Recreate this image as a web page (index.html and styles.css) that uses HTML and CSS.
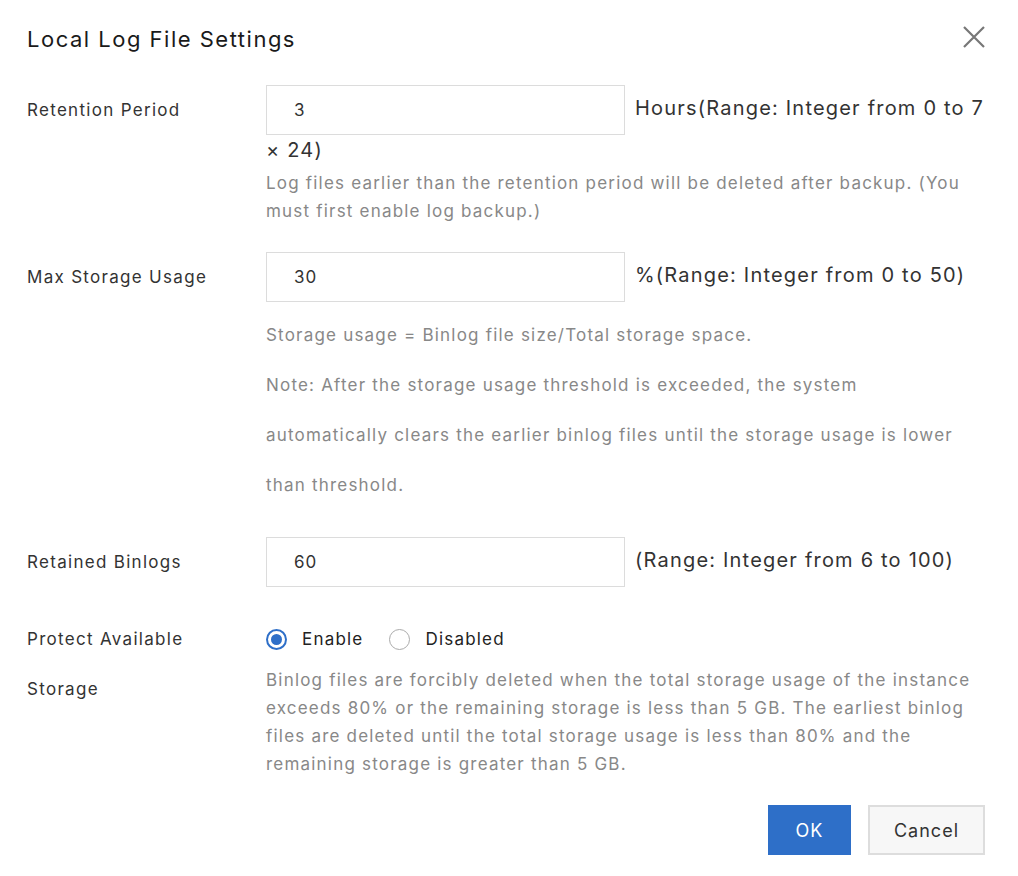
FILE: index.html
```html
<!DOCTYPE html>
<html>
<head>
<meta charset="utf-8">
<link rel="stylesheet" href="styles.css">
</head>
<body>
<div class="dialog">
  <div class="header">
    <h1 class="title">Local Log File Settings</h1>
    <span class="close" aria-label="close">
      <svg width="24" height="24" viewBox="0 0 24 24"><path d="M2 2 L22 22 M22 2 L2 22" stroke="#777" stroke-width="2.2" fill="none"/></svg>
    </span>
  </div>
  <div class="form">
    <div class="row">
      <div class="label">Retention Period</div>
      <div class="control">
        <div class="line"><span class="input">3</span><span class="unit">Hours(Range: Integer from 0 to 7 × 24)</span></div>
        <div class="help">Log files earlier than the retention period will be deleted after backup. (You must first enable log backup.)</div>
      </div>
    </div>
    <div class="row">
      <div class="label">Max Storage Usage</div>
      <div class="control">
        <div class="line"><span class="input">30</span><span class="unit">%(Range: Integer from 0 to 50)</span></div>
        <div class="help tall">
          <div>Storage usage = Binlog file size/Total storage space.</div>
          <div>Note: After the storage usage threshold is exceeded, the system automatically clears the earlier binlog files until the storage usage is lower than threshold.</div>
        </div>
      </div>
    </div>
    <div class="row">
      <div class="label">Retained Binlogs</div>
      <div class="control">
        <div class="line"><span class="input">60</span><span class="unit">(Range: Integer from 6 to 100)</span></div>
      </div>
    </div>
    <div class="row">
      <div class="label">Protect Available Storage</div>
      <div class="control">
        <div class="radios">
          <label class="radio"><span class="dot checked"></span>Enable</label>
          <label class="radio"><span class="dot"></span>Disabled</label>
        </div>
        <div class="help">Binlog files are forcibly deleted when the total storage usage of the instance exceeds 80% or the remaining storage is less than 5 GB. The earliest binlog files are deleted until the total storage usage is less than 80% and the remaining storage is greater than 5 GB.</div>
      </div>
    </div>
  </div>
  <div class="footer">
    <button class="btn primary">OK</button>
    <button class="btn">Cancel</button>
  </div>
</div>
</body>
</html>
```
FILE: styles.css
```css
* { box-sizing: border-box; }
html, body { margin: 0; background: #fff; }
body {
  font-family: Inter, "Noto Sans", "Liberation Sans", sans-serif;
  color: #333;
}
.dialog {
  width: 1018px;
  height: 876px;
  padding: 0 28px 0 27px;
}
.header {
  height: 78px;
  display: flex;
  align-items: center;
  justify-content: space-between;
  padding-right: 4px;
}
.title {
  margin: 0;
  font-size: 22px;
  font-weight: 400;
  letter-spacing: 1.5px;
  color: #1a1a1a;
}
.close { display: flex; margin-top: -4px; }
.form {
  padding-top: 7px;
  display: flex;
  flex-direction: column;
  gap: 27px;
}
.row {
  display: grid;
  grid-template-columns: 239px 1fr;
}
.label {
  font-size: 17px;
  line-height: 50px;
  letter-spacing: 1.3px;
  color: #333;
  padding-right: 40px;
}
.line {
  font-size: 20px;
  line-height: 30px;
  letter-spacing: 1.2px;
  color: #333;
}
.input {
  display: inline-block;
  vertical-align: middle;
  width: 359px;
  height: 50px;
  border: 1px solid #dcdcdc;
  padding-left: 27px;
  font-size: 17px;
  line-height: 48px;
  color: #333;
  margin-right: 10px;
  letter-spacing: 1px;
}
.help {
  font-size: 17px;
  line-height: 28px;
  letter-spacing: 1.2px;
  color: #888;
  margin-top: 4px;
}
.help.tall { line-height: 50px; margin-top: 8px; max-width: 700px; }
.radios + .help { margin-top: 2px; }
.radios {
  display: flex;
  gap: 26px;
  height: 50px;
  align-items: center;
}
.radio {
  display: flex;
  align-items: center;
  font-size: 17px;
  letter-spacing: 1.2px;
  color: #222;
}
.dot {
  width: 21px;
  height: 21px;
  border-radius: 50%;
  border: 1.5px solid #aaa;
  margin-right: 15px;
  position: relative;
}
.dot.checked { border: 2px solid #2e6fc8; }
.dot.checked::after {
  content: "";
  position: absolute;
  left: 3px; top: 3px; right: 3px; bottom: 3px;
  border-radius: 50%;
  background: #2e6fc8;
}
.footer {
  display: flex;
  justify-content: flex-end;
  gap: 17px;
  margin-top: 27px;
  padding-right: 5px;
}
.btn {
  font-family: inherit;
  height: 50px;
  font-size: 18px;
  letter-spacing: 1px;
  padding: 0 24px;
  border: 2px solid #dddddd;
  background: #f7f7f7;
  color: #333;
}
.btn.primary {
  background: #2e6fc8;
  border-color: #2e6fc8;
  color: #fff;
  width: 83px;
  padding: 0;
}
```
